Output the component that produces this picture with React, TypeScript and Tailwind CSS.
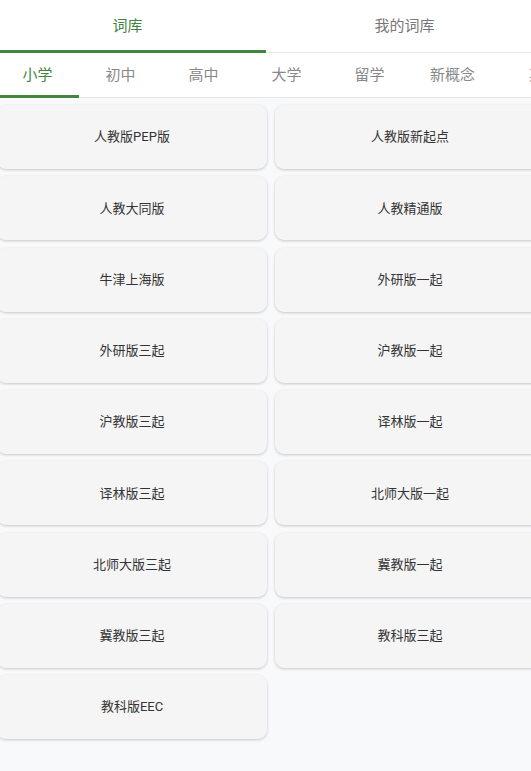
import React from 'react'

const topTabs = ['词库', '我的词库']
const levels = ['小学', '初中', '高中', '大学', '留学', '新概念', '其他']
const books = [
  '人教版PEP版', '人教版新起点',
  '人教大同版', '人教精通版',
  '牛津上海版', '外研版一起',
  '外研版三起', '沪教版一起',
  '沪教版三起', '译林版一起',
  '译林版三起', '北师大版一起',
  '北师大版三起', '冀教版一起',
  '冀教版三起', '教科版三起',
  '教科版EEC',
]

const App = () => {
  return (
    <div className="w-[531px] h-[771px] overflow-hidden bg-[#f8f9fb] font-['Roboto','Noto_Sans_CJK_SC',sans-serif]">
      <div className="bg-white border-b border-[#e8e8e8]">
        <div className="flex h-[52px] w-[554px] -ml-[11px]">
          {topTabs.map((t, i) => (
            <div key={t} className="relative flex-1 flex items-center justify-center">
              <span className={i === 0 ? 'text-[15px] text-[#43843f]' : 'text-[15px] text-[#777]'}>{t}</span>
              {i === 0 && <div className="absolute left-0 right-0 bottom-[-1px] h-[3px] bg-[#43843f]" />}
            </div>
          ))}
        </div>
      </div>
      <div className="flex h-[45px] bg-white border-b border-[#e6e8ec] -ml-[4px]">
        {levels.map((t, i) => (
          <div
            key={t}
            className={
              i === levels.length - 1
                ? 'relative w-[100px] shrink-0 flex items-center justify-center'
                : 'relative w-[83px] shrink-0 flex items-center justify-center'
            }
          >
            <span className={i === 0 ? 'text-[15px] text-[#43843f]' : 'text-[15px] text-[#888]'}>{t}</span>
            {i === 0 && <div className="absolute left-[4px] right-0 bottom-[-1px] h-[3px] bg-[#43843f]" />}
          </div>
        ))}
      </div>
      <div className="grid grid-cols-2 gap-x-[8px] gap-y-[7.25px] w-[548px] -ml-[3px] pt-[7px]">
        {books.map((b) => (
          <div
            key={b}
            className="h-[64px] rounded-[9px] bg-[#f5f5f5] shadow-[0_1px_3px_rgba(0,0,0,0.2)] flex items-center justify-center text-[13px] text-[#333]"
          >
            {b}
          </div>
        ))}
      </div>
    </div>
  )
}

export default App
